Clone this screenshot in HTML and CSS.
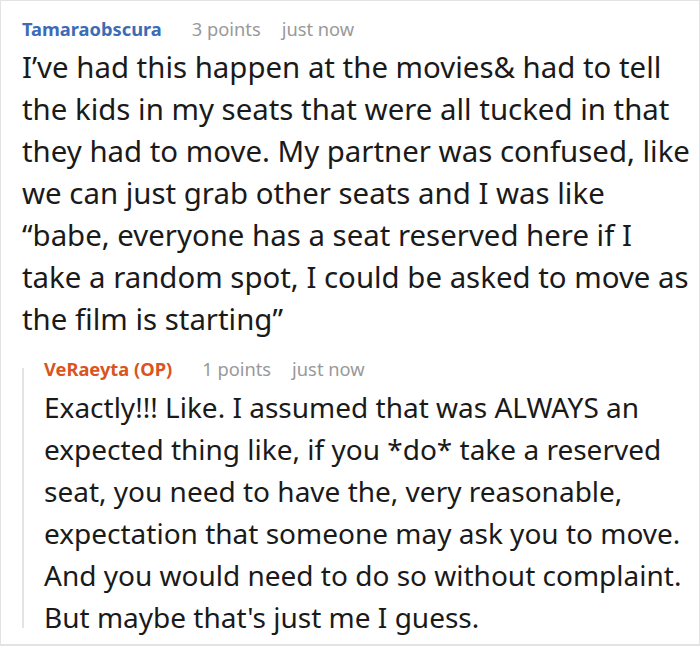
FILE: index.html
```html
<!DOCTYPE html>
<html>
<head>
<meta charset="utf-8">
<link rel="stylesheet" href="styles.css">
</head>
<body>
<div class="card">
  <div class="comment">
    <div class="meta">
      <span class="name">Tamaraobscura</span>
      <span class="info">3 points</span>
      <span class="info">just now</span>
    </div>
    <div class="text text-main">I’ve had this happen at the movies&amp; had to tell the kids in my seats that were all tucked in that they had to move. My partner was confused, like we can just grab other seats and I was like “babe, everyone has a seat reserved here if I take a random spot, I could be asked to move as the film is starting”</div>
  </div>
  <div class="reply">
    <div class="rail"></div>
    <div class="reply-body">
      <div class="meta">
        <span class="name op">VeRaeyta (OP)</span>
        <span class="info">1 points</span>
        <span class="info">just now</span>
      </div>
      <div class="text">Exactly!!! Like. I assumed that was ALWAYS an expected thing like, if you *do* take a reserved seat, you need to have the, very reasonable, expectation that someone may ask you to move. And you would need to do so without complaint. But maybe that's just me I guess.</div>
    </div>
  </div>
</div>
</body>
</html>
```
FILE: styles.css
```css
html, body {
  margin: 0;
  padding: 0;
  background: #fff;
}
.card {
  width: 700px;
  height: 646px;
  box-sizing: border-box;
  border: 1px solid #e3e3e3;
  border-bottom-width: 2px;
  padding: 15px 0 0 21px;
  font-family: "Noto Sans", "Open Sans", sans-serif;
}
.meta {
  font-size: 18.3px;
  line-height: 26px;
  display: flex;
}
.name {
  font-weight: 700;
  color: #3b6cb5;
  margin-right: 30px;
}
.name.op {
  color: #d9541e;
}
.info {
  color: #999;
  margin-right: 21px;
}
.text {
  font-size: 28px;
  line-height: 42px;
  color: #1a1a1a;
  margin-top: 4px;
}
.text-main {
  font-size: 29.4px;
  padding-right: 8px;
}
.reply {
  display: flex;
  margin-top: 16px;
}
.rail {
  flex: none;
  width: 2px;
  background: #e3e3e3;
  margin: 12px 0 10px 0;
}
.reply-body {
  padding-left: 20px;
}
```
